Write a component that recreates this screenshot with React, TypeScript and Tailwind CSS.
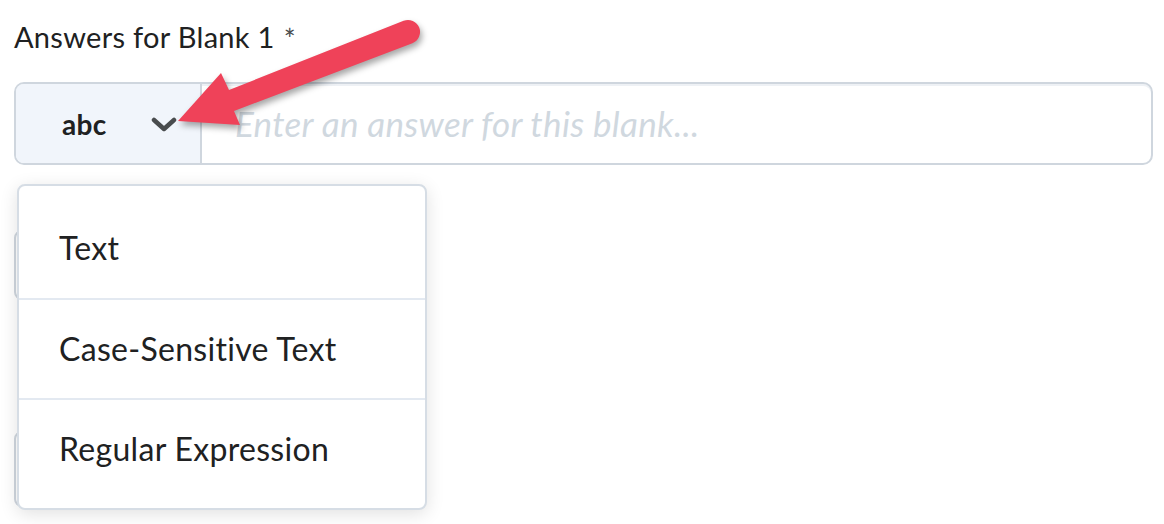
import React from "react";

const options = ["Text", "Case-Sensitive Text", "Regular Expression"];

function Chevron() {
  return (
    <svg width="26" height="15" viewBox="0 0 26 15" className="shrink-0">
      <polyline
        points="3,3 13,12 23,3"
        fill="none"
        stroke="#494c4e"
        strokeWidth="4.5"
        strokeLinecap="round"
        strokeLinejoin="round"
      />
    </svg>
  );
}

function Arrow() {
  return (
    <svg
      width="1164"
      height="524"
      viewBox="0 0 1164 524"
      className="absolute inset-0 pointer-events-none drop-shadow-[2px_4px_3px_rgba(0,0,0,0.35)]"
    >
      <path
        d="M 178 121 L 221 73 L 229 90 L 403.6 20.8 A 12 12 0 0 1 412.4 43.2 L 234 111 L 240 125 Z"
        fill="#ef4259"
        strokeLinejoin="round"
      />
    </svg>
  );
}

export default function App() {
  return (
    <div
      className="relative w-[1164px] h-[524px] overflow-hidden bg-white pl-[14px] pr-[11px] tracking-[0.3px] [font-variant-ligatures:none]"
      style={{ fontFamily: "Lato, 'Noto Sans', sans-serif" }}
    >
      <div className="flex h-[54px] items-end pb-[1px] text-[29px] leading-[32px] text-[#202122]">
        <span>Answers for Blank 1</span>
        <span className="ml-[9px] mb-[0px] text-[28px] leading-none text-[#494c4e]">*</span>
      </div>

      {/* answer input */}
      <div className="mt-[28px] flex h-[83px] rounded-[10px] border-2 border-[#cfd6de] overflow-hidden shadow-[inset_0_2px_0_0_#eef1f5]">
        <div className="flex w-[186px] shrink-0 items-center border-r-2 border-[#cfd6de] bg-[#f1f5fb] pl-[46px]">
          <span className="text-[28px] font-bold text-[#202122]">abc</span>
          <span className="ml-[44px] mt-[2px]">
            <Chevron />
          </span>
        </div>
        <div className="flex flex-1 items-center pl-[33px] text-[35px] italic text-[#d0d8df]">
          Enter an answer for this blank...
        </div>
      </div>

      {/* rows behind the menu */}
      <div className="mt-[65px] h-[70px] w-[150px] rounded-[8px] border-2 border-[#cfd6de] bg-white" />
      <div className="mt-[131px] h-[76px] w-[152px] rounded-[8px] border-2 border-[#cfd6de] bg-white" />

      {/* type menu */}
      <div className="absolute left-[17px] top-[184px] w-[410px] h-[326px] rounded-[8px] border-2 border-[#d6dde5] bg-white py-[12px] shadow-[0_4px_18px_rgba(0,0,0,0.12)]">
        {options.map((o, i) => (
          <div
            key={o}
            className={
              "flex h-[100px] items-center pl-[40px] text-[32px] text-[#202122] " +
              (i > 0 ? "border-t-2 border-[#e3e9f1]" : "")
            }
          >
            {o}
          </div>
        ))}
      </div>

      <Arrow />
    </div>
  );
}
